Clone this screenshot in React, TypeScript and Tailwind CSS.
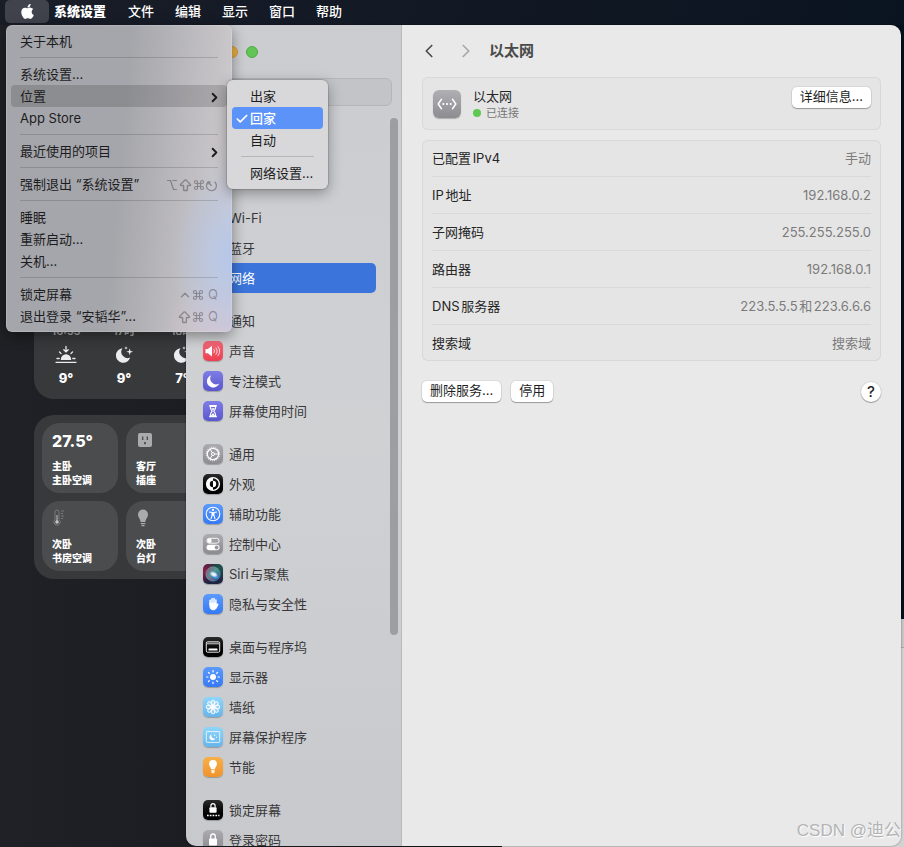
import React from "react";
import { FaApple } from "react-icons/fa";
import { ArrowBigUp, Check, ChevronLeft, ChevronRight, ChevronUp, Command, Option } from "lucide-react";

type IconName =
  | "wifi" | "bluetooth" | "globe" | "bell" | "sound" | "focus" | "hourglass" | "gear"
  | "appearance" | "access" | "control" | "siri" | "hand" | "dock" | "display"
  | "wallpaper" | "saver" | "bulb" | "lock" | "password";

const BLUE = "bg-linear-to-b from-[#5b9afc] to-[#3579f5]";
const RED = "bg-linear-to-b from-[#f4697a] to-[#ec3e50]";
const INDIGO = "bg-linear-to-b from-[#7f7ee6] to-[#5a56cc]";
const GRAY = "bg-linear-to-b from-[#acacb0] to-[#8b8b90]";
const BLACK = "bg-linear-to-b from-[#2b2b2b] to-[#000000]";
const SKY = "bg-linear-to-b from-[#8fd6fb] to-[#66b4ea]";
const ORANGE = "bg-linear-to-b from-[#f7b04a] to-[#f0932b]";
const SIRI =
  "bg-[radial-gradient(circle_at_10%_35%,#8e1f48_0%,transparent_55%),radial-gradient(circle_at_80%_20%,#1b5a50_0%,transparent_60%),linear-gradient(#2a1c38,#1c2344)]";

const tones: Record<IconName, string> = {
  wifi: BLUE, bluetooth: BLUE, globe: BLUE, bell: RED, sound: RED, focus: INDIGO,
  hourglass: INDIGO, gear: GRAY, appearance: BLACK, access: BLUE, control: GRAY,
  siri: SIRI, hand: BLUE, dock: BLACK, display: BLUE, wallpaper: SKY, saver: SKY,
  bulb: ORANGE, lock: BLACK, password: GRAY,
};

const rays = [0, 45, 90, 135, 180, 225, 270, 315];

const glyphs: Record<IconName, React.ReactNode> = {
  wifi: <path d="M4 9a9 9 0 0 1 12 0M6.5 12a5 5 0 0 1 7 0M10 15h.01" fill="none" stroke="#fff" strokeWidth="1.6" />,
  bluetooth: <path d="M6.5 7l7 6L10 16V4l3.5 3-7 6" fill="none" stroke="#fff" strokeWidth="1.2" />,
  globe: <circle cx="10" cy="10" r="6" fill="none" stroke="#fff" strokeWidth="1.2" />,
  bell: <path d="M5 14l1.5-2V9a3.5 3.5 0 0 1 7 0v3l1.5 2z" fill="#fff" />,
  sound: (
    <>
      <path d="M2.500 8h2.300L9 4.800v10.600L4.800 12.200H2.500z" fill="#fff" />
      <path d="M11 8.300c.7 1 .7 2.500 0 3.500M13 6.900c1.500 1.900 1.500 4.500 0 6.400M15 5.600c2.200 2.800 2.200 6.200 0 9" fill="none" stroke="#fff" strokeWidth="0.9" strokeLinecap="round" opacity="0.85" />
    </>
  ),
  focus: <path d="M8.200 4.300a5.900 5.900 0 0 0 7.900 8.300A6.300 6.300 0 1 1 8.200 4.300z" fill="#fff" />,
  hourglass: (
    <>
      <path d="M6.200 4h7.600v1.300H6.200zM6.200 14.900h7.600v1.300H6.200z" fill="#fff" />
      <path d="M7.200 5.500c0 2.400.8 3.200 2 4.600-1.200 1.400-2 2.200-2 4.600h5.600c0-2.400-.8-3.200-2-4.600 1.200-1.400 2-2.200 2-4.600z" fill="none" stroke="#fff" strokeWidth="1.1" />
      <path d="M8.200 7.200h3.600L10 9.600zM8 14.400l2-2.300 2 2.300z" fill="#fff" />
    </>
  ),
  gear: (
    <g fill="none" stroke="#fff">
      <circle cx="10" cy="10" r="5.700" strokeWidth="1.2" />
      <circle cx="10" cy="10" r="6.800" strokeWidth="1" strokeDasharray="1.1 1.035" />
      <circle cx="10" cy="10" r="1.500" strokeWidth="1" />
      <path d="M11.500 10h4.200M9.200 8.700L7 5.200M9.200 11.300L7 14.800" strokeWidth="1" />
    </g>
  ),
  appearance: (
    <>
      <circle cx="10" cy="10" r="6.400" fill="none" stroke="#fff" strokeWidth="1.4" />
      <path d="M10 3.800a6.200 6.200 0 0 0 0 12.400v-3a3.200 3.200 0 0 1 0-6.400z" fill="#fff" />
      <path d="M10 6.800a3.200 3.200 0 0 1 0 6.400z" fill="#fff" />
    </>
  ),
  access: (
    <>
      <circle cx="10" cy="10" r="6.800" fill="none" stroke="#fff" strokeWidth="1.1" />
      <circle cx="10" cy="5.900" r="1.100" fill="#fff" />
      <path d="M6.400 8l2.700.5v2.600l-1 3.600M13.600 8l-2.700.5v2.600l1 3.600M10 8.600v2.600" fill="none" stroke="#fff" strokeWidth="1.1" strokeLinejoin="round" strokeLinecap="round" />
    </>
  ),
  control: (
    <>
      <rect x="3.900" y="4.300" width="12.200" height="4.900" rx="2.450" fill="none" stroke="#fff" strokeWidth="0.9" />
      <circle cx="6.500" cy="6.750" r="2.200" fill="#fff" />
      <rect x="3.500" y="10.700" width="13" height="5.600" rx="2.800" fill="#fff" />
      <circle cx="13.600" cy="13.500" r="1.900" fill="#98989c" />
    </>
  ),
  siri: (
    <>
      <defs>
        <linearGradient id="siriOrb" x1="0" y1="0" x2="1" y2="1">
          <stop offset="0" stopColor="#9b4a78" />
          <stop offset="0.45" stopColor="#4f9a95" />
          <stop offset="1" stopColor="#2b3fa0" />
        </linearGradient>
        <radialGradient id="siriCore">
          <stop offset="0" stopColor="#ffffff" />
          <stop offset="0.5" stopColor="#e3ecfb" stopOpacity="0.9" />
          <stop offset="1" stopColor="#8fc3f0" stopOpacity="0" />
        </radialGradient>
      </defs>
      <circle cx="10" cy="10" r="7.200" fill="url(#siriOrb)" stroke="#6fc4b2" strokeOpacity="0.5" strokeWidth="0.8" />
      <path d="M3.800 8c1 4.500 4 7.500 8.500 8-5 1-8.800-3-8.500-8z" fill="#d83a78" fillOpacity="0.8" />
      <path d="M9 12c2.200 1 4.600 1 7 .2-1.300 2.800-4.800 3.600-7-.2z" fill="#3f8ff0" />
      <ellipse cx="10.800" cy="10.400" rx="4.800" ry="3" fill="url(#siriCore)" transform="rotate(25 10.800 10.400)" />
    </>
  ),
  hand: (
    <g fill="none" stroke="#fff" strokeWidth="1.5" strokeLinecap="round" strokeLinejoin="round">
      <path d="M7.100 10.500V6.300M9 9.500V4.800M11 9.500V4.600M12.900 10.500V6.100" />
      <path d="M6.900 9.500v3c0 2 1.400 3.300 3.200 3.300 2 0 2.900-.9 3.700-2.600l1.400-3.100c-.9-.5-1.500-.1-2.300 1.300V9.300z" fill="#fff" strokeWidth="0.9" />
    </g>
  ),
  dock: (
    <>
      <rect x="3.300" y="4.800" width="13.400" height="10.400" rx="1.200" fill="none" stroke="#e4e4e4" strokeWidth="1" />
      <path d="M3.800 6.500h12.400" stroke="#9a9a9a" strokeWidth="1.8" />
      <rect x="5.500" y="11.600" width="9" height="2" rx="0.4" fill="#fff" />
    </>
  ),
  display: (
    <>
      <circle cx="10" cy="10" r="3" fill="#fff" />
      {rays.map((a) => (
        <path key={a} d="M10 3.600v1.300" stroke="#fff" strokeWidth="1.2" strokeLinecap="round" transform={`rotate(${a} 10 10)`} />
      ))}
    </>
  ),
  wallpaper: (
    <g fill="#fff" fillOpacity="0.25" stroke="#fff" strokeWidth="0.9">
      {rays.map((a) => (
        <ellipse key={a} cx="10" cy="5.600" rx="1.900" ry="2.500" transform={`rotate(${a} 10 10)`} />
      ))}
      <circle cx="10" cy="10" r="1.600" fillOpacity="1" />
    </g>
  ),
  saver: (
    <>
      <rect x="3.300" y="4.600" width="13.400" height="10.800" rx="0.8" fill="none" stroke="#fff" strokeWidth="0.9" opacity="0.85" />
      <path d="M8.500 7.400a3 3 0 0 0 3.700 4 3 3 0 1 1-3.700-4z" fill="#fff" />
      <path d="M11 7.500h1.200v1.200H11zM13 9.700h1v1h-1z" fill="#fff" />
    </>
  ),
  bulb: (
    <>
      <path d="M10 3a3.900 3.900 0 0 0-3.900 3.900c0 2.200 1.700 3 2 5.300h3.800c.3-2.300 2-3.100 2-5.300A3.900 3.900 0 0 0 10 3z" fill="#fff" />
      <path d="M8.300 13h3.400v2c0 .9-.8 1.400-1.700 1.400s-1.700-.5-1.700-1.400z" fill="#fff" fillOpacity="0.8" />
    </>
  ),
  lock: (
    <>
      <rect x="6.400" y="7.300" width="7.200" height="5.400" rx="0.9" fill="#fff" />
      <path d="M7.900 7.600V5.700a2.100 2.100 0 0 1 4.200 0v1.900" fill="none" stroke="#fff" strokeWidth="1.2" />
      <path d="M4 15.500h12.500" stroke="#fff" strokeWidth="1.5" strokeDasharray="1.7 1.1" />
    </>
  ),
  password: (
    <>
      <rect x="6" y="8.500" width="8" height="7" rx="1" fill="#fff" />
      <path d="M7.700 9V6.300a2.300 2.300 0 0 1 4.600 0V9" fill="none" stroke="#fff" strokeWidth="1.3" />
    </>
  ),
};

const groups: { icon: IconName; label: string; active?: boolean }[][] = [
  [
    { icon: "wifi", label: "Wi-Fi" },
    { icon: "bluetooth", label: "蓝牙" },
    { icon: "globe", label: "网络", active: true },
  ],
  [
    { icon: "bell", label: "通知" },
    { icon: "sound", label: "声音" },
    { icon: "focus", label: "专注模式" },
    { icon: "hourglass", label: "屏幕使用时间" },
  ],
  [
    { icon: "gear", label: "通用" },
    { icon: "appearance", label: "外观" },
    { icon: "access", label: "辅助功能" },
    { icon: "control", label: "控制中心" },
    { icon: "siri", label: "Siri与聚焦" },
    { icon: "hand", label: "隐私与安全性" },
  ],
  [
    { icon: "dock", label: "桌面与程序坞" },
    { icon: "display", label: "显示器" },
    { icon: "wallpaper", label: "墙纸" },
    { icon: "saver", label: "屏幕保护程序" },
    { icon: "bulb", label: "节能" },
  ],
  [
    { icon: "lock", label: "锁定屏幕" },
    { icon: "password", label: "登录密码" },
  ],
];

const details = [
  ["已配置IPv4", "手动"],
  ["IP地址", "192.168.0.2"],
  ["子网掩码", "255.255.255.0"],
  ["路由器", "192.168.0.1"],
  ["DNS服务器", "223.5.5.5和223.6.6.6"],
  ["搜索域", "搜索域"],
];

function MenuBar() {
  return (
    <nav className="flex h-[25px] items-center gap-[22px] bg-linear-to-r from-[#191d28] to-[#0a1420] pb-0.5 pl-[5px] text-[13px] font-medium text-white">
      <div className="flex items-center gap-[5px]">
        <button aria-label="Apple" className="flex h-[23px] w-11 items-center justify-center rounded-[5px] bg-[#40434c]">
          <FaApple size={17} />
        </button>
        <button className="font-black">系统设置</button>
      </div>
      <div className="flex gap-[21px]">
        {["文件", "编辑", "显示", "窗口", "帮助"].map((t) => (
          <button key={t}>{t}</button>
        ))}
      </div>
    </nav>
  );
}

function MenuItem({ label, children, highlighted }: { label: string; children?: React.ReactNode; highlighted?: boolean }) {
  return (
    <button
      role="menuitem"
      className={`mx-[5px] flex h-[22px] items-center justify-between rounded-[4px] px-[9px] pt-0.5 text-left ${highlighted ? "bg-black/15" : ""}`}
    >
      <span>{label}</span>
      {children && <span className="flex items-center text-black/30">{children}</span>}
    </button>
  );
}

function Divider() {
  return <div className="mx-3.5 my-[5px] h-px bg-black/15" />;
}

function SubmenuArrow() {
  return <ChevronRight size={15} strokeWidth={3} className="-mr-1 text-[#1c1c1e]" />;
}

function PowerGlyph() {
  return (
    <svg width="13" height="13" viewBox="0 0 13 13" fill="none" stroke="currentColor" strokeWidth="1.3">
      <path d="M4 2.300a5 5 0 1 0 5.500.4M6.700 6.800L3.200 3.200M3 5.600V3h2.600" />
    </svg>
  );
}

function AppleMenu() {
  return (
    <div
      role="menu"
      className="absolute top-[25px] left-[6px] flex w-[226px] flex-col rounded-[6px] bg-[#a5a6ab] bg-[radial-gradient(ellipse_60px_100px_at_100%_76%,#b4c7ecf2,transparent),radial-gradient(ellipse_70px_60px_at_100%_100%,#d6c6d2,transparent),linear-gradient(95deg,transparent_50%,#cfcbce_95%)] py-[5px] text-[13px] text-[#1c1c1e] shadow-[0_4px_14px_rgba(0,0,0,0.4),inset_0_0_0_1px_rgba(255,255,255,0.15)]"
    >
      <MenuItem label="关于本机" />
      <Divider />
      <MenuItem label="系统设置..." />
      <MenuItem label="位置" highlighted><SubmenuArrow /></MenuItem>
      <MenuItem label="App Store" />
      <Divider />
      <MenuItem label="最近使用的项目"><SubmenuArrow /></MenuItem>
      <Divider />
      <MenuItem label="强制退出 “系统设置”">
        <Option size={12} strokeWidth={2.4} />
        <ArrowBigUp size={15} strokeWidth={2.2} />
        <Command size={12} strokeWidth={2.4} />
        <PowerGlyph />
      </MenuItem>
      <Divider />
      <MenuItem label="睡眠" />
      <MenuItem label="重新启动..." />
      <MenuItem label="关机..." />
      <Divider />
      <MenuItem label="锁定屏幕">
        <ChevronUp size={14} strokeWidth={2.4} />
        <Command size={12} strokeWidth={2.4} />
        <span className="ml-1">Q</span>
      </MenuItem>
      <MenuItem label="退出登录 “安韬华”...">
        <ArrowBigUp size={15} strokeWidth={2.2} />
        <Command size={12} strokeWidth={2.4} />
        <span className="ml-1">Q</span>
      </MenuItem>
    </div>
  );
}

function LocationMenu() {
  return (
    <div
      role="menu"
      className="absolute top-[80px] left-[227px] flex w-[101px] flex-col rounded-[6px] bg-[#d8d8da] p-[5px] text-[13px] text-[#1c1c1e] shadow-[0_4px_14px_rgba(0,0,0,0.35),0_0_0_1px_rgba(0,0,0,0.12)]"
    >
      <button role="menuitem" className="h-[22px] pt-0.5 pl-[18px] text-left">出家</button>
      <button role="menuitem" className="flex h-[22px] items-center gap-px rounded-[4px] bg-[#5b93f8] pt-0.5 pl-[3px] font-medium text-white">
        <Check size={14} strokeWidth={3} />
        回家
      </button>
      <button role="menuitem" className="h-[22px] pt-0.5 pl-[18px] text-left">自动</button>
      <div className="mx-[9px] my-[5px] h-px bg-black/15" />
      <button role="menuitem" className="h-[22px] pt-0.5 pl-[18px] text-left whitespace-nowrap">网络设置...</button>
    </div>
  );
}

function MoonStars() {
  return (
    <svg width="20" height="20" viewBox="0 0 20 20" fill="#ececee">
      <path d="M8.500 3.200a6.300 6.300 0 0 0 7.700 9.400A7.300 7.300 0 1 1 8.500 3.200z" />
      <path d="M15.700 3.200l.8 2.700 2.700.8-2.700.8-.8 2.700-.8-2.700-2.700-.8 2.700-.8zM12 1.200l.5 1.300 1.300.5-1.300.5-.5 1.300-.5-1.300-1.300-.5 1.300-.5z" />
    </svg>
  );
}

function Sunset() {
  return (
    <svg width="22" height="20" viewBox="0 0 22 20" fill="none" stroke="#ececee" strokeWidth="1.3" strokeLinecap="round">
      <path d="M11 1.500v5M8.800 4.700L11 6.800l2.200-2.100M4.500 7l1.600 1.600M17.500 7l-1.600 1.600M2 13.500h2.200M17.800 13.500H20M1 17.300h20" />
      <path d="M6.500 14.300a4.500 4.500 0 0 1 9 0z" fill="#ececee" />
    </svg>
  );
}

function WeatherWidget() {
  const hours = [
    { time: "16:55", icon: <Sunset />, temp: "9°" },
    { time: "17时", icon: <MoonStars />, temp: "9°" },
    { time: "18时", icon: <MoonStars />, temp: "7°" },
  ];
  return (
    <section className="absolute top-[240px] left-[34px] flex h-[159px] w-[180px] items-end rounded-[20px] bg-[#38393b] px-[3px] pb-3">
      {hours.map((h) => (
        <div key={h.time} className="flex w-[58px] flex-col items-center text-white">
          <span className="text-[11px] leading-5 font-semibold text-white/60">{h.time}</span>
          <span className="flex h-7 items-center">{h.icon}</span>
          <span className="text-[13px] leading-[18px] font-extrabold">{h.temp}</span>
        </div>
      ))}
    </section>
  );
}

function Tile({ lines, children }: { lines: [string, string]; children: React.ReactNode }) {
  return (
    <div className="flex h-[70px] w-[76px] flex-col gap-[7px] rounded-[18px] bg-[#4a4c4e] px-2.5 pt-[5px] text-white">
      <div className="flex h-6 items-center">{children}</div>
      <p className="text-[10px] leading-[14px] font-black">
        {lines[0]}
        <br />
        {lines[1]}
      </p>
    </div>
  );
}

function HomeWidget() {
  return (
    <section className="absolute top-[415px] left-[34px] grid w-max grid-cols-2 gap-2 rounded-[20px] bg-[#38393b] p-2">
      <Tile lines={["主卧", "主卧空调"]}>
        <span className="pt-0.5 text-[16px] font-extrabold">27.5°</span>
      </Tile>
      <Tile lines={["客厅", "插座"]}>
        <svg width="18" height="16" viewBox="0 0 18 16">
          <rect x="2" y="1" width="14" height="14" rx="2" fill="#a9abad" />
          <path d="M6.700 4.500v3.500M11.300 4.500v3.500" stroke="#4a4c4e" strokeWidth="1.3" />
          <rect x="8" y="10" width="2" height="2.300" rx="0.8" fill="#4a4c4e" />
        </svg>
      </Tile>
      <Tile lines={["次卧", "书房空调"]}>
        <svg width="14" height="18" viewBox="0 0 14 18" fill="none" stroke="#77797b">
          <path d="M3 10.500V3a2 2 0 0 1 4 0v7.500a3.200 3.200 0 1 1-4 0z" />
          <circle cx="5" cy="13" r="1.800" fill="#c4c6c8" stroke="none" />
          <path d="M5 6v6" stroke="#c4c6c8" />
          <path d="M9 2h3M9 4.500h2M9 7h3M9 9.500h2" />
        </svg>
      </Tile>
      <Tile lines={["次卧", "台灯"]}>
        <svg width="14" height="18" viewBox="0 0 14 18" fill="#a9abad">
          <path d="M7 .5a5 5 0 0 0-5 5c0 3 2.300 4 2.600 7.500h4.800C9.700 9.500 12 8.500 12 5.500a5 5 0 0 0-5-5zM4.700 14h4.600v1.200H4.700zM5.500 16h3v1.300h-3z" />
        </svg>
      </Tile>
    </section>
  );
}

function Sidebar() {
  return (
    <aside className="flex w-[216px] shrink-0 flex-col overflow-hidden border-r border-[#b9b9bf] bg-linear-to-b from-[#cbccd0] via-[#d0d1d3] to-[#c8c9cd]">
      <div className="flex h-[53px] shrink-0 items-center gap-2 pl-5">
        <button aria-label="关闭" className="size-3 rounded-full bg-[#ec6a5e]" />
        <button aria-label="最小化" className="size-3 rounded-full border border-[#d09a38] bg-[#e9ae45]" />
        <button aria-label="缩放" className="size-3 rounded-full border border-[#52ab43] bg-[#61c454]" />
      </div>
      <input aria-label="搜索" className="mr-[9px] ml-2.5 h-7 shrink-0 rounded-[6px] border border-[#b5b6b9] bg-[#c3c4c7]" />
      <div className="mt-3 flex min-h-0 flex-1 justify-between pr-[3px] pl-2.5">
        <ul className="flex w-[180px] flex-col gap-[13px] pt-[85px] text-[13px] text-[#38383a] [text-autospace:normal]">
          {groups.map((g) => (
            <li key={g[0].label}>
              {g.map((it) => (
                <button
                  key={it.label}
                  className={`flex h-[30px] w-full items-center gap-1.5 rounded-[5px] pl-[7px] ${it.active ? "bg-[#3b75db] text-white" : ""}`}
                >
                  <span className={`size-5 rounded-[5px] shadow-[0_1px_1px_rgba(0,0,0,0.25)] ${tones[it.icon]}`}>
                    <svg width="20" height="20" viewBox="0 0 20 20">{glyphs[it.icon]}</svg>
                  </span>
                  <span className="pt-0.5">{it.label}</span>
                </button>
              ))}
            </li>
          ))}
        </ul>
        <div className="h-[517px] w-2 rounded-full bg-[#9d9ea1]" />
      </div>
    </aside>
  );
}

function PushButton({ children }: { children: React.ReactNode }) {
  return (
    <button className="h-[21px] rounded-[5px] bg-white px-2 pb-0.5 text-[13px] leading-[19px] text-[#1f1f1f] shadow-[0_0_0_1px_rgba(0,0,0,0.06),0_1px_1px_rgba(0,0,0,0.3)]">
      {children}
    </button>
  );
}

function NetworkPane() {
  return (
    <main className="flex min-w-0 flex-1 flex-col bg-[#e9e9e9] px-5 text-[13px] text-[#262626]">
      <header className="flex h-[52px] items-center text-[#4a4a4a]">
        <button aria-label="后退" className="-ml-1"><ChevronLeft size={22} strokeWidth={1.8} /></button>
        <button aria-label="前进" className="ml-[15px] text-[#a6a6a6]"><ChevronRight size={22} strokeWidth={1.8} /></button>
        <h1 className="ml-3 text-[15px] font-bold">以太网</h1>
      </header>
      <section className="flex h-[53px] items-start rounded-[6px] bg-[#e5e5e5] px-[11px] ring-1 ring-[#d8d8d8] ring-inset">
        <span className="mt-[13px] size-7 rounded-[6px] bg-linear-to-b from-[#b0b0b4] to-[#8c8c91] shadow-[0_1px_1px_rgba(0,0,0,0.25)]">
          <svg width="28" height="28" viewBox="0 0 28 28" fill="none" stroke="#fff" strokeWidth="1.5" strokeLinecap="round" strokeLinejoin="round">
            <path d="M8.500 9.300L5.200 14l3.300 4.700M19.500 9.300l3.300 4.700-3.300 4.700" />
            <path d="M10.300 14h.01M14 14h.01M17.700 14h.01" strokeWidth="2.2" />
          </svg>
        </span>
        <div className="ml-3 flex-1 pt-[11px]">
          <p className="leading-4">以太网</p>
          <p className="flex items-center gap-[5px] text-[11px] leading-[18px] text-[#777]">
            <span className="size-2 rounded-full bg-[#5ec852]" />
            已连接
          </p>
        </div>
        <div className="-mr-px pt-2.5"><PushButton>详细信息...</PushButton></div>
      </section>
      <dl className="mt-2.5 rounded-[6px] bg-[#e5e5e5] px-2.5 ring-1 ring-[#d8d8d8] [text-autospace:normal] ring-inset">
        {details.map(([k, v]) => (
          <div key={k} className="flex h-[37px] items-center justify-between border-b border-[#d9d9d9] pt-0.5 last:h-9 last:border-b-0">
            <dt>{k}</dt>
            <dd className="text-[#7b7b7b]">{v}</dd>
          </div>
        ))}
      </dl>
      <footer className="mt-5 flex items-center gap-2.5">
        <PushButton>删除服务...</PushButton>
        <PushButton>停用</PushButton>
        <button aria-label="帮助" className="ml-auto size-5 rounded-full bg-white text-[15px] leading-5 font-medium shadow-[0_0_0_1px_rgba(0,0,0,0.06),0_1px_1px_rgba(0,0,0,0.3)]">?</button>
      </footer>
    </main>
  );
}

export default function App() {
  return (
    <div
      lang="zh-CN"
      className="relative h-screen overflow-hidden bg-linear-to-r from-[#202126] via-[#16181e] to-[#04101c] font-['Inter','Noto_Sans_CJK_SC',sans-serif] [text-autospace:no-autospace]"
    >
      <MenuBar />
      <WeatherWidget />
      <HomeWidget />
      <div className="absolute top-[619px] right-0 bottom-0 left-[502px] bg-[#d2d2d2]">
        <div className="h-[29px] border-b border-[#a8a8a8] bg-[#c6c6c6]" />
      </div>
      <div className="absolute top-[25px] right-[3px] bottom-px left-[186px] flex overflow-hidden rounded-[10px] shadow-[0_0_2px_rgba(0,0,0,0.5)]">
        <Sidebar />
        <NetworkPane />
      </div>
      <AppleMenu />
      <LocationMenu />
      <p className="absolute right-[3px] bottom-1 font-['Liberation_Sans','Noto_Sans_CJK_SC',sans-serif] text-[17px] leading-6 text-[#b4b4b4] [text-shadow:1px_1px_1px_#fff]">CSDN @迪公</p>
    </div>
  );
}
